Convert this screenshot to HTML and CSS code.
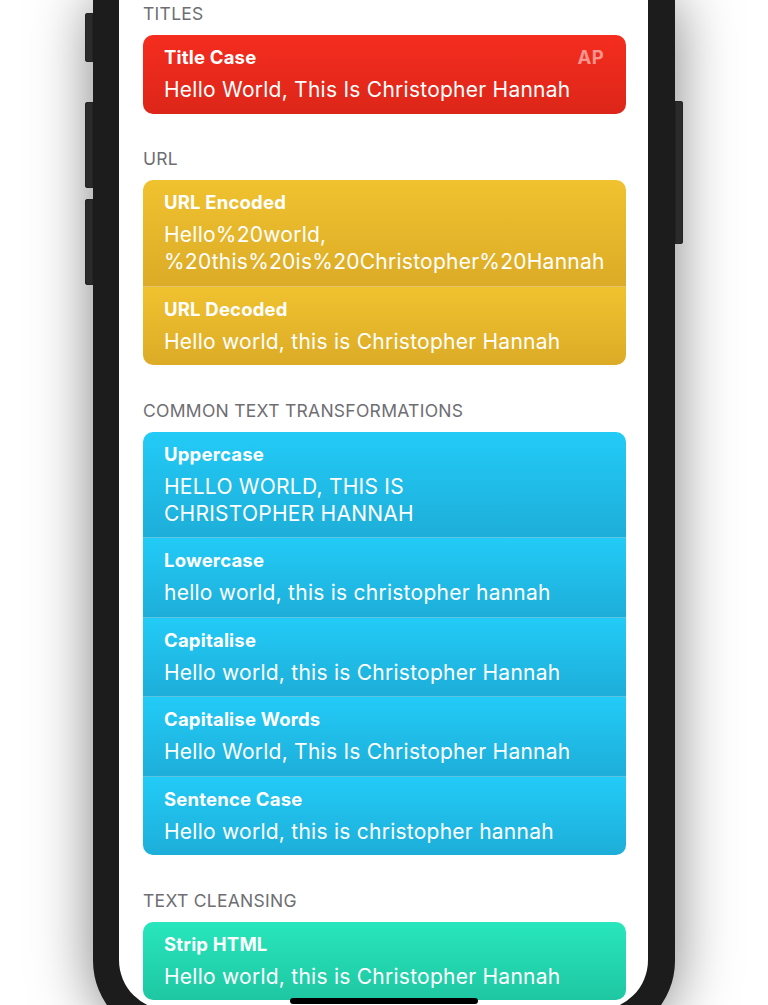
FILE: index.html
```html
<!DOCTYPE html>
<html lang="en">
<head>
<meta charset="utf-8">
<title>Text transformations</title>
<link rel="stylesheet" href="styles.css">
</head>
<body>
<div class="stage">
  <div class="phone">
    <span class="side-btn side-btn-l1"></span>
    <span class="side-btn side-btn-l2"></span>
    <span class="side-btn side-btn-l3"></span>
    <span class="side-btn side-btn-r1"></span>
    <div class="screen">
      <section class="group">
        <h2 class="group-title">TITLES</h2>
        <div class="card card-red">
          <div class="row">
            <div class="row-head"><span class="row-title">Title Case</span><span class="row-badge">AP</span></div>
            <div class="row-value">Hello World, This Is Christopher Hannah</div>
          </div>
        </div>
      </section>
      <section class="group">
        <h2 class="group-title">URL</h2>
        <div class="card card-yellow">
          <div class="row">
            <div class="row-head"><span class="row-title">URL Encoded</span></div>
            <div class="row-value">Hello%20world,<br>%20this%20is%20Christopher%20Hannah</div>
          </div>
          <div class="row">
            <div class="row-head"><span class="row-title">URL Decoded</span></div>
            <div class="row-value">Hello world, this is Christopher Hannah</div>
          </div>
        </div>
      </section>
      <section class="group">
        <h2 class="group-title">COMMON TEXT TRANSFORMATIONS</h2>
        <div class="card card-blue">
          <div class="row">
            <div class="row-head"><span class="row-title">Uppercase</span></div>
            <div class="row-value">HELLO WORLD, THIS IS<br>CHRISTOPHER HANNAH</div>
          </div>
          <div class="row">
            <div class="row-head"><span class="row-title">Lowercase</span></div>
            <div class="row-value">hello world, this is christopher hannah</div>
          </div>
          <div class="row">
            <div class="row-head"><span class="row-title">Capitalise</span></div>
            <div class="row-value">Hello world, this is Christopher Hannah</div>
          </div>
          <div class="row">
            <div class="row-head"><span class="row-title">Capitalise Words</span></div>
            <div class="row-value">Hello World, This Is Christopher Hannah</div>
          </div>
          <div class="row">
            <div class="row-head"><span class="row-title">Sentence Case</span></div>
            <div class="row-value">Hello world, this is christopher hannah</div>
          </div>
        </div>
      </section>
      <section class="group">
        <h2 class="group-title">TEXT CLEANSING</h2>
        <div class="card card-green">
          <div class="row">
            <div class="row-head"><span class="row-title">Strip HTML</span></div>
            <div class="row-value">Hello world, this is Christopher Hannah</div>
          </div>
        </div>
      </section>
      <div class="home-indicator"></div>
    </div>
  </div>
</div>
</body>
</html>
```
FILE: styles.css
```css
html, body {
  margin: 0;
  padding: 0;
  background: #ffffff;
  overflow: hidden;
}

.stage {
  width: 768px;
  height: 1005px;
  overflow: hidden;
}

.phone {
  position: relative;
  margin-left: 93px;
  width: 582px;
  box-sizing: border-box;
  border-left: 26px solid #1c1c1c;
  border-right: 27px solid #1c1c1c;
  border-bottom: 27px solid #1c1c1c;
  border-radius: 0 0 76px 76px;
  background: #1c1c1c;
  box-shadow: 0 0 60px rgba(0, 0, 0, 0.5);
}

.side-btn {
  position: absolute;
  width: 8px;
  background: #2b2b2b;
  box-shadow: inset 0 0 0 1px #232323;
}

.side-btn-l1 { left: -34px; top: 13px; height: 49px; border-radius: 3px 0 0 3px; }
.side-btn-l2 { left: -34px; top: 102px; height: 86px; border-radius: 3px 0 0 3px; }
.side-btn-l3 { left: -34px; top: 199px; height: 86px; border-radius: 3px 0 0 3px; }
.side-btn-r1 { right: -35px; top: 101px; height: 143px; border-radius: 0 3px 3px 0; }

.screen {
  position: relative;
  height: 1010px;
  box-sizing: border-box;
  padding: 4px 22px 0 24px;
  background: #ffffff;
  border-radius: 0 0 50px 50px;
  overflow: hidden;
  font-family: "Inter", "Liberation Sans", sans-serif;
  color: #ffffff;
}

.group + .group {
  margin-top: 35.5px;
}

.group-title {
  margin: 0 0 11px 0;
  font-size: 17.5px;
  line-height: 20px;
  font-weight: 400;
  color: #6e6e73;
  letter-spacing: 0.28px;
}

.card {
  border-radius: 10px;
  overflow: hidden;
}

.row {
  padding: 11px 22px 10.5px 21px;
}

.row + .row {
  border-top: 1px solid rgba(255, 255, 255, 0.28);
}

.row-head {
  display: flex;
  justify-content: space-between;
  align-items: center;
  height: 22px;
  margin-bottom: 8px;
}

.row-title {
  font-size: 18.5px;
  line-height: 22px;
  font-weight: 700;
  letter-spacing: 0.2px;
}

.row-badge {
  font-size: 18.5px;
  line-height: 22px;
  font-weight: 700;
  letter-spacing: 0.3px;
  color: rgba(255, 255, 255, 0.5);
}

.row-value {
  font-size: 21px;
  line-height: 27px;
  font-weight: 400;
  letter-spacing: 0.25px;
}

.card-red .row { background: linear-gradient(#f52d1f, #dc2619); }
.card-yellow .row { background: linear-gradient(#f0c22f, #dcab27); }
.card-blue .row { background: linear-gradient(#23cbf7, #1daed9); }
.card-green .row { background: linear-gradient(#28e6bd, #1ec7a2); }

.home-indicator {
  position: absolute;
  left: 171px;
  bottom: 6px;
  width: 188px;
  height: 6px;
  border-radius: 3px;
  background: #000000;
}
```
